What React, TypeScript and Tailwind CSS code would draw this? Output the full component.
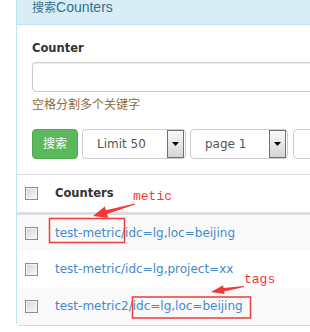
const rows = [
  { name: 'test-metric', tags: '/idc=lg,loc=beijing' },
  { name: 'test-metric', tags: '/idc=lg,project=xx' },
  { name: 'test-metric2', tags: '/idc=lg,loc=beijing' },
];

function Checkbox() {
  return (
    <div className="w-[13px] h-[13px] border border-[#8e8e8e] bg-linear-to-br from-[#d4d4d4] to-[#fbfbfb] shadow-[inset_0_0_0_1px_#f2f2f2]" />
  );
}

function FakeSelect({ label, width }: { label: string; width: string }) {
  return (
    <div className={`${width} h-[30px] flex items-center border border-[#ccc] rounded-[4px] bg-white`}>
      <span className="flex-1 pl-[14px] text-[12px] text-[#555] leading-[16px]">{label}</span>
      <div className="w-[17px] h-[28px] mr-[1px] shrink-0 flex items-center justify-center border border-[#707070] bg-linear-to-b from-[#fafafa] to-[#d4d4d4]">
        <svg width="7" height="4" viewBox="0 0 7 4">
          <polygon points="0,0 7,0 3.5,4" fill="#000" />
        </svg>
      </div>
    </div>
  );
}

export default function App() {
  return (
    <div className="relative w-[310px] h-[332px] overflow-hidden bg-white font-['DejaVu_Sans','Noto_Sans_CJK_SC',sans-serif]">
      <div className="ml-[16px] w-[340px] border-l border-b border-[#bce8f1] rounded-bl-[4px]">
        <div className="h-[25px] bg-[#d9edf7] border-b border-[#bce8f1] pl-[15px]">
          <span className="block leading-[14px] text-[#31708f] text-[14px] font-['Liberation_Sans','Noto_Sans_CJK_SC',sans-serif]">
            <span className="text-[12px]">搜索</span>Counters
          </span>
        </div>

        <div className="px-[15px] pt-[15px] pb-[15px]">
          <div className="text-[11.5px] font-bold text-[#333] leading-[16px] mb-[6px]">Counter</div>
          <div className="h-[30px] border border-[#ccc] rounded-[4px] bg-white shadow-[inset_0_1px_1px_rgba(0,0,0,0.075)]" />
          <div className="mt-[5px] text-[12px] leading-[16px] text-[#8a6d3b]">空格分割多个关键字</div>

          <div className="mt-[16px] flex items-center">
            <div className="w-[46px] h-[30px] shrink-0 flex items-center justify-center rounded-[4px] bg-[#5cb85c] border border-[#4cae4c] text-white text-[12px]">
              搜索
            </div>
            <div className="ml-[4px] shrink-0">
              <FakeSelect label="Limit 50" width="w-[104px]" />
            </div>
            <div className="ml-[4px] shrink-0">
              <FakeSelect label="page 1" width="w-[98px]" />
            </div>
            <div className="ml-[5px] shrink-0">
              <FakeSelect label="" width="w-[98px]" />
            </div>
          </div>
        </div>

        <div className="border-t border-[#ddd]">
          <div className="h-[39px] flex items-center border-b-2 border-[#ddd]">
            <div className="w-[30px] pl-[8px] shrink-0">
              <Checkbox />
            </div>
            <div className="pl-[8px] text-[11.5px] font-bold text-[#333]">Counters</div>
          </div>
          {rows.map((r, i) => (
            <div
              key={i}
              className={`h-[37px] flex items-center ${i === 0 ? 'border-t border-[#ddd]' : ''} ${i % 2 === 0 ? 'bg-[#f9f9f9]' : 'bg-white'}`}
            >
              <div className="w-[30px] pl-[8px] shrink-0">
                <Checkbox />
              </div>
              <div className="pl-[8px] text-[12px] leading-[17px] text-[#428bca]">
                {r.name}
                {r.tags}
              </div>
            </div>
          ))}
        </div>
      </div>

      {/* annotations */}
      <svg className="absolute inset-0 pointer-events-none" width="310" height="332" viewBox="0 0 310 332">
        <rect x="49.5" y="218.5" width="75" height="24" fill="none" stroke="#ee3b3b" strokeWidth="1.5" />
        <rect x="132.5" y="297" width="118" height="21" fill="none" stroke="#ee3b3b" strokeWidth="1.5" />
        <polygon
          points="93,216 104.8,206.4 105.9,210.2 134.9,203.5 135.1,204.5 107,214.1 108.1,217.9"
          fill="#f03a3a"
        />
        <polygon
          points="211,292 223,285.3 223.5,287.9 243.9,286 244.1,287 224.1,291.5 224.6,294.1"
          fill="#f03a3a"
        />
      </svg>
      <span className="absolute left-[133px] top-[190px] text-[13px] leading-[13px] text-[#f03a3a] font-['Liberation_Mono',monospace]">
        metic
      </span>
      <span className="absolute left-[244px] top-[273px] text-[13px] leading-[13px] text-[#f03a3a] font-['Liberation_Mono',monospace]">
        tags
      </span>
    </div>
  );
}
